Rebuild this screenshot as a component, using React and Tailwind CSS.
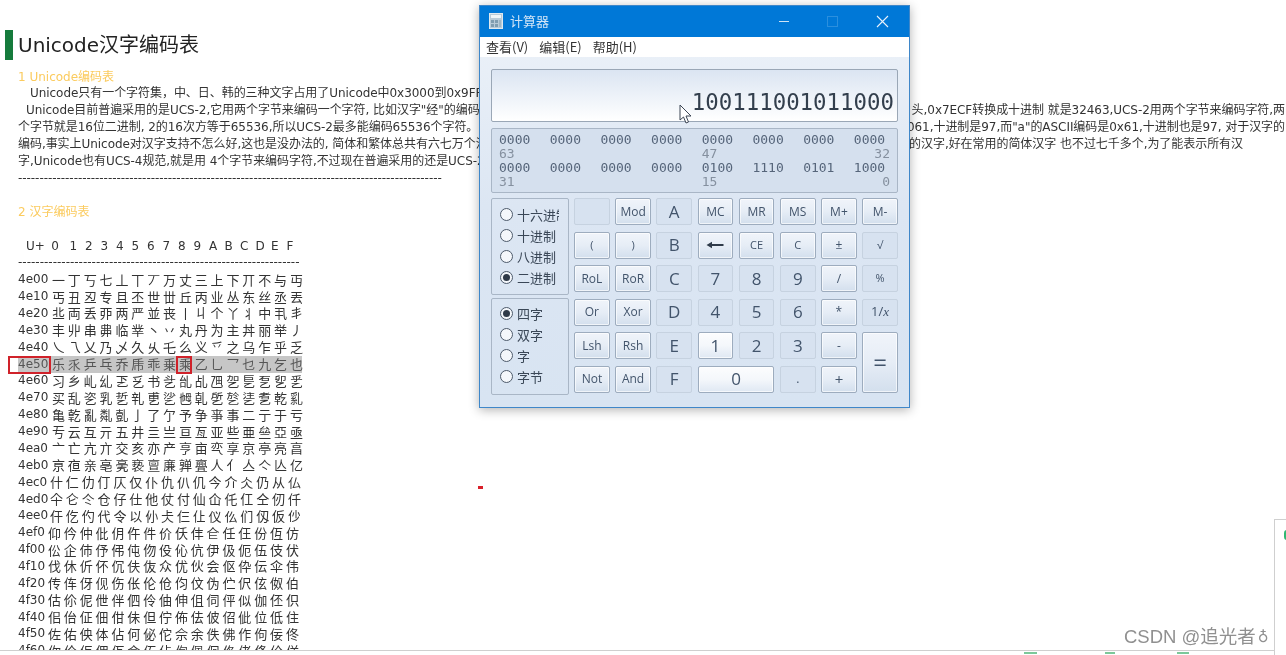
import React from "react";

const BODY_FONT = "font-['DejaVu_Sans','Noto_Sans_CJK_SC',sans-serif]";

const rowStarts = [];
for (let i = 0; i < 23; i++) rowStarts.push(0x4e00 + i * 16);

const headerCols = ["1", "2", "3", "4", "5", "6", "7", "8", "9", "A", "B", "C", "D", "E", "F"];

// calculator keys, in grid order. on = lit button, off = flat greyed out one
const keys = [
  { t: "", on: false },
  { t: "Mod", on: true, s: "text-[12px]" },
  { t: "A", on: false, s: "text-[17px]" },
  { t: "MC", on: true, s: "text-[12px]" },
  { t: "MR", on: true, s: "text-[12px]" },
  { t: "MS", on: true, s: "text-[12px]" },
  { t: "M+", on: true, s: "text-[12px]" },
  { t: "M-", on: true, s: "text-[12px]" },
  { t: "(", on: true, s: "text-[11px]" },
  { t: ")", on: true, s: "text-[11px]" },
  { t: "B", on: false, s: "text-[17px]" },
  { arrow: true, on: true },
  { t: "CE", on: true, s: "text-[11px]" },
  { t: "C", on: true, s: "text-[11px]" },
  { t: "±", on: true, s: "text-[12px]" },
  { t: "√", on: false, s: "text-[11px]" },
  { t: "RoL", on: true, s: "text-[12px]" },
  { t: "RoR", on: true, s: "text-[12px]" },
  { t: "C", on: false, s: "text-[17px]" },
  { t: "7", on: false, s: "text-[17px]" },
  { t: "8", on: false, s: "text-[17px]" },
  { t: "9", on: false, s: "text-[17px]" },
  { t: "/", on: true, s: "text-[12px]" },
  { t: "%", on: false, s: "text-[11px]" },
  { t: "Or", on: true, s: "text-[12px]" },
  { t: "Xor", on: true, s: "text-[12px]" },
  { t: "D", on: false, s: "text-[17px]" },
  { t: "4", on: false, s: "text-[17px]" },
  { t: "5", on: false, s: "text-[17px]" },
  { t: "6", on: false, s: "text-[17px]" },
  { t: "*", on: true, s: "text-[12px]" },
  { t: "1/", x: true, on: false, s: "text-[13px]" },
  { t: "Lsh", on: true, s: "text-[12px]" },
  { t: "Rsh", on: true, s: "text-[12px]" },
  { t: "E", on: false, s: "text-[17px]" },
  { t: "1", on: true, bright: true, s: "text-[17px]" },
  { t: "2", on: false, s: "text-[17px]" },
  { t: "3", on: false, s: "text-[17px]" },
  { t: "-", on: true, s: "text-[12px]" },
  { t: "=", on: true, s: "text-[24px] row-span-2" },
  { t: "Not", on: true, s: "text-[12px]" },
  { t: "And", on: true, s: "text-[12px]" },
  { t: "F", on: false, s: "text-[17px]" },
  { t: "0", on: true, bright: true, s: "text-[17px] col-span-2" },
  { t: ".", on: false, s: "text-[12px]" },
  { t: "+", on: true, s: "text-[15px]" },
];

function CalcKey({ k }) {
  const base = "flex items-center justify-center rounded-[2px] border text-[#42546b] ";
  let look = "border-[#c6d2e0] bg-[#d7e2f0]";
  if (k.on)
    look =
      "border-[#9dacbe] bg-gradient-to-b from-[#f0f4fa] via-[#e6edf6] to-[#d3dfed] shadow-[inset_0_0_0_1px_rgba(255,255,255,0.65)]";
  if (k.bright)
    look =
      "border-[#9dacbe] bg-gradient-to-b from-[#fcfdfe] via-[#f4f7fb] to-[#dfe8f3] shadow-[inset_0_0_0_1px_rgba(255,255,255,0.7)]";
  return (
    <div className={base + look + " " + (k.s || "")}>
      {k.arrow ? (
        <svg width="18" height="8" viewBox="0 0 18 8">
          <path d="M0.5 4L6 0.8v2.2h11.5v2H6v2.2z" fill="#2f3b4a" />
        </svg>
      ) : (
        k.t
      )}
      {k.x && <i className="font-['Liberation_Serif',serif]">x</i>}
    </div>
  );
}

function Radio({ label, checked }) {
  return (
    <div className="flex h-[21px] items-center gap-[4px] whitespace-nowrap">
      <span className="flex h-[13px] w-[13px] shrink-0 items-center justify-center rounded-full border border-[#4d5a6b] bg-[#f4f7fb]">
        {checked && <span className="h-[7px] w-[7px] rounded-full bg-[#2f3a48]" />}
      </span>
      <span>{label}</span>
    </div>
  );
}

function Calculator() {
  const top = ["0000", "0000", "0000", "0000", "0000", "0000", "0000", "0000"];
  const bottom = ["0000", "0000", "0000", "0000", "0100", "1110", "0101", "1000"];
  return (
    <div className="absolute left-[479px] top-[5px] flex h-[403px] w-[431px] flex-col border border-[#3f87c9] bg-gradient-to-b from-[#eef3f9] via-[#dce6f3] to-[#d8e4f2] font-['Noto_Sans_CJK_SC','Open_Sans',sans-serif] shadow-[0_2px_10px_rgba(0,0,0,0.3)]">
      {/* title bar */}
      <div className="flex h-[31px] shrink-0 items-center bg-[#0078d7] pb-[1px] pl-[9px] text-[13px] text-[#cfe4f6]">
        <svg width="14" height="16" viewBox="0 0 14 16" className="shrink-0">
          <rect x="0.5" y="0.5" width="13" height="15" fill="#b8cbd8" stroke="#dfe9ef" />
          <rect x="2" y="2" width="10" height="3" fill="#eef5f8" />
          <rect x="2" y="7" width="3" height="3" fill="#7f9db0" />
          <rect x="6" y="7" width="3" height="3" fill="#7f9db0" />
          <rect x="10" y="7" width="2" height="7" fill="#9fb6c4" />
          <rect x="2" y="11" width="3" height="3" fill="#7f9db0" />
          <rect x="6" y="11" width="3" height="3" fill="#7f9db0" />
        </svg>
        <span className="ml-[7px]">计算器</span>
        <svg width="12" height="12" viewBox="0 0 12 12" className="ml-auto">
          <path d="M1 6.5h10" stroke="#cfe4f6" strokeWidth="1" />
        </svg>
        <svg width="11" height="11" viewBox="0 0 11 11" className="ml-[37px]">
          <rect x="0.5" y="0.5" width="10" height="10" fill="none" stroke="#2b8fde" />
        </svg>
        <svg width="13" height="13" viewBox="0 0 13 13" className="ml-[38px] mr-[20px]">
          <path d="M1 1l11 11M12 1L1 12" stroke="#e8f2fb" strokeWidth="1.1" />
        </svg>
      </div>
      {/* menu */}
      <div className="flex h-[20px] shrink-0 items-center gap-[11px] bg-white pl-[6px] text-[13px] text-[#333]">
        <span>查看(V)</span>
        <span>编辑(E)</span>
        <span>帮助(H)</span>
      </div>
      <div className="flex flex-1 flex-col px-[11px] pt-[12px]">
        {/* display */}
        <div className="flex h-[53px] w-[407px] items-end justify-end rounded-[2px] border border-[#9aa7b6] bg-gradient-to-b from-[#dbe5f2] to-white pb-[6px] pr-[3px] font-['DejaVu_Sans_Mono',monospace] text-[22.4px] leading-[26px] text-[#333f4d]">
          100111001011000
        </div>
        {/* bit panel */}
        <div className="mt-[6px] h-[65px] w-[407px] rounded-[2px] border border-[#a9b6c6] bg-[#d5e0ee] px-[7px] pt-[4px] font-['DejaVu_Sans_Mono',monospace] text-[13px] leading-[14px] text-[#56657a]">
          <div className="grid grid-cols-[repeat(7,50.7px)_1fr]">
            {top.map((b, i) => (
              <span key={i}>{b}</span>
            ))}
          </div>
          <div className="grid grid-cols-[repeat(4,50.7px)_1fr_auto] text-[#85909f]">
            <span>63</span>
            <span />
            <span />
            <span />
            <span>47</span>
            <span>32</span>
          </div>
          <div className="grid grid-cols-[repeat(7,50.7px)_1fr]">
            {bottom.map((b, i) => (
              <span key={i}>{b}</span>
            ))}
          </div>
          <div className="grid grid-cols-[repeat(4,50.7px)_1fr_auto] text-[#85909f]">
            <span>31</span>
            <span />
            <span />
            <span />
            <span>15</span>
            <span>0</span>
          </div>
        </div>
        {/* keypad */}
        <div className="mt-[5px] flex gap-[5px]">
          <div className="flex w-[78px] shrink-0 flex-col gap-[3px] text-[13px] text-[#3a4757]">
            <div className="h-[97px] overflow-hidden rounded-[2px] border border-[#a9b6c6] pl-[8px] pt-[5px] pr-[9px]">
              <div className="overflow-hidden">
                <Radio label="十六进制" />
                <Radio label="十进制" />
                <Radio label="八进制" />
                <Radio label="二进制" checked />
              </div>
            </div>
            <div className="h-[97px] rounded-[2px] border border-[#a9b6c6] pl-[8px] pt-[4px]">
              <Radio label="四字" checked />
              <Radio label="双字" />
              <Radio label="字" />
              <Radio label="字节" />
            </div>
          </div>
          <div className="grid w-[324px] grid-cols-8 grid-rows-[repeat(6,27px)] gap-x-[5.4px] gap-y-[6.5px] font-['Open_Sans',sans-serif]">
            {keys.map((k, i) => (
              <CalcKey key={i} k={k} />
            ))}
          </div>
        </div>
      </div>
    </div>
  );
}

export default function App() {
  return (
    <div className={"relative flex h-[655px] w-[1286px] flex-col overflow-hidden bg-white text-[12px] text-[#333] blur-[0.4px] " + BODY_FONT}>
      <div className="min-h-0 flex-1 overflow-hidden pl-[18px] pt-[30px] leading-[16.9px]">
        <div className="relative flex h-[30px] items-center">
          <span className="absolute -left-[13px] top-0 h-[30px] w-[8px] bg-[#157b3c]" />
          <h1 className="text-[20px] leading-[30px] text-[#222]">Unicode汉字编码表</h1>
        </div>
        <div className="mt-[8.5px] text-[#fbcb5e]">1 Unicode编码表</div>
        <div className="whitespace-nowrap tracking-[-0.05px]">
          <div className="pl-[12px]">Unicode只有一个字符集，中、日、韩的三种文字占用了Unicode中0x3000到0x9FFF的部分</div>
          <div className="flex w-[1267px] justify-between pl-[8px]">
            <span>Unicode目前普遍采用的是UCS-2,它用两个字节来编码一个字符, 比如汉字"经"的编码是</span>
            <span>头,0x7ECF转换成十进制 就是32463,UCS-2用两个字节来编码字符,两</span>
          </div>
          <div className="flex w-[1267px] justify-between">
            <span>个字节就是16位二进制, 2的16次方等于65536,所以UCS-2最多能编码65536个字符。 编码值从</span>
            <span>061,十进制是97,而"a"的ASCII编码是0x61,十进制也是97, 对于汉字的</span>
          </div>
          <div className="flex w-[1225px] justify-between">
            <span>编码,事实上Unicode对汉字支持不怎么好,这也是没办法的, 简体和繁体总共有六七万个汉字</span>
            <span>的汉字,好在常用的简体汉字 也不过七千多个,为了能表示所有汉</span>
          </div>
          <div>字,Unicode也有UCS-4规范,就是用 4个字节来编码字符,不过现在普遍采用的还是UCS-2</div>
          <div>{"-".repeat(105 - 6)}</div>
        </div>
        <div className="mt-[16.9px] text-[#fbcb5e]">2 汉字编码表</div>
        {/* code table */}
        <div className="mt-[16.9px] w-[284px]">
          <div className="flex pl-[8px]">
            <span className="w-[26px]">U+</span>
            <span className="w-[19px]">0</span>
            {headerCols.map((c) => (
              <span key={c} className="w-[16px]">
                {c}
              </span>
            ))}
          </div>
          <div className="whitespace-nowrap">{"-".repeat(65)}</div>
          {rowStarts.map((code) => {
            const hot = code === 0x4e50;
            // later rows sit a little further left in the picture
            let labelWidth = "w-[34px]";
            if (code >= 0x4ec0) labelWidth = "w-[32px]";
            if (code >= 0x4ef0) labelWidth = "w-[30px]";
            return (
              <div
                key={code}
                className={"relative flex h-[16.86px] items-center " + (hot ? "bg-[#c6c6c6] text-[#555]" : "")}
              >
                {hot && (
                  <span className="absolute -left-[10px] top-0 h-[18px] w-[43px] border-2 border-[#d0222a]" />
                )}
                {hot && (
                  <span className="absolute left-[158px] top-0 h-[18px] w-[16px] border-2 border-[#d0222a]" />
                )}
                <span className={labelWidth + " shrink-0"}>{code.toString(16)}</span>
                <div className="grid grid-cols-[repeat(16,15.87px)] text-[13px] font-['Noto_Sans_CJK_SC',sans-serif] leading-[16px]">
                  {Array.from({ length: 16 }, (_, i) => (
                    <span key={i}>{String.fromCodePoint(code + i)}</span>
                  ))}
                </div>
              </div>
            );
          })}
        </div>
      </div>

      {/* bottom strip */}
      <div className="relative h-[5px] shrink-0 border-t border-[#cfcfcf] bg-white">
        <span className="absolute left-[1024px] top-[1px] h-[2px] w-[13px] bg-[#7cc89a]" />
        <span className="absolute left-[1105px] top-[1px] h-[2px] w-[10px] bg-[#7cc89a]" />
        <span className="absolute left-[1177px] top-[1px] h-[2px] w-[12px] bg-[#7cc89a]" />
      </div>

      {/* side panel peeking in at the right */}
      <div className="absolute left-[1274px] top-[519px] h-[136px] w-[12px] border-l border-t border-[#cfcfcf] bg-white">
        <span className="absolute left-[9px] top-[10px] h-[10px] w-[3px] rounded-l-full bg-[#2eb872]" />
      </div>

      <span className="absolute left-[478px] top-[486px] h-[3px] w-[5px] bg-[#d9202a]" />

      <Calculator />

      {/* mouse cursor */}
      <svg width="14" height="21" viewBox="0 0 14 21" className="absolute left-[679px] top-[104px]">
        <path d="M1 1v15l3.5-3 2.5 6 2.5-1-2.5-6h5z" fill="#fff" stroke="#3c4654" strokeWidth="1" />
      </svg>

      <div className="absolute left-[1124px] top-[625px] flex items-center whitespace-nowrap text-[18.5px] leading-[24px] text-[#909090] font-['Liberation_Sans','Noto_Sans_CJK_SC',sans-serif]">
        CSDN @追光者
        <span className="ml-[2px] text-[15px] font-['DejaVu_Sans',sans-serif]">♁</span>
      </div>
    </div>
  );
}
